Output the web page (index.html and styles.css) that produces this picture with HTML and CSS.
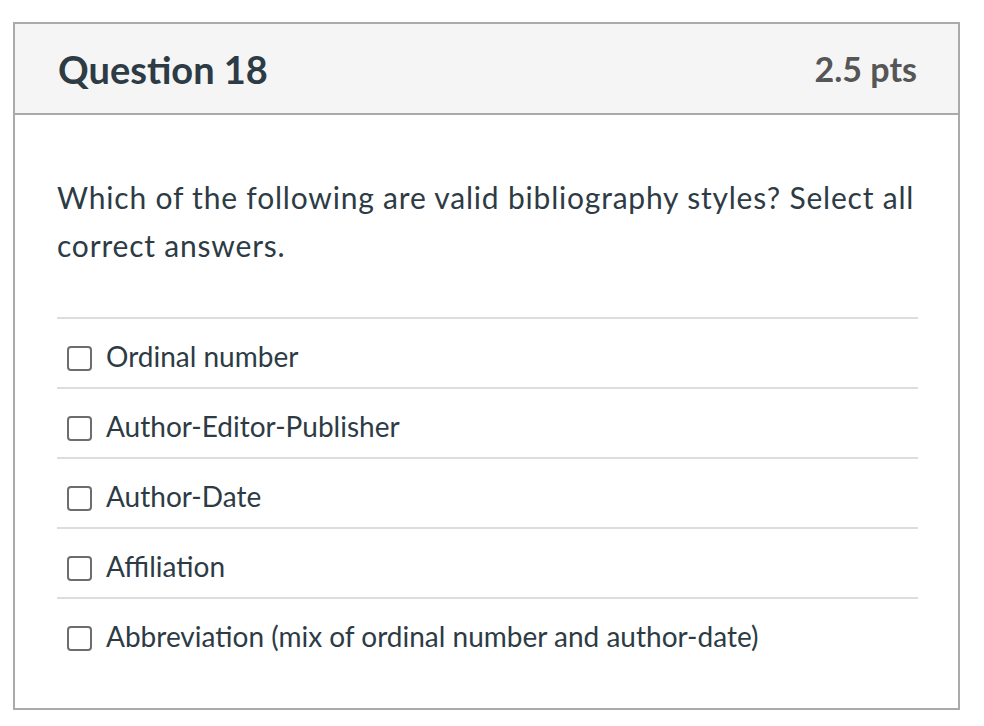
FILE: index.html
```html
<!DOCTYPE html>
<html lang="en">
<head>
<meta charset="utf-8">
<title>Question 18</title>
<link rel="stylesheet" href="styles.css">
</head>
<body>
<div class="question">
  <div class="header">
    <h2 class="title">Question 18</h2>
    <div class="points">2.5 pts</div>
  </div>
  <div class="body">
    <p class="prompt">Which of the following are valid bibliography styles? Select all correct answers.</p>
    <ul class="answers">
      <li class="answer"><span class="box"></span><span class="label">Ordinal number</span></li>
      <li class="answer"><span class="box"></span><span class="label">Author-Editor-Publisher</span></li>
      <li class="answer"><span class="box"></span><span class="label">Author-Date</span></li>
      <li class="answer"><span class="box"></span><span class="label">Affiliation</span></li>
      <li class="answer"><span class="box"></span><span class="label">Abbreviation (mix of ordinal number and author-date)</span></li>
    </ul>
  </div>
</div>
</body>
</html>
```

FILE: styles.css
```css
html, body {
  margin: 0;
  padding: 0;
  background: #ffffff;
}
body {
  font-family: Lato, "Open Sans", sans-serif;
  color: #2d3b45;
}
.question {
  margin: 22px 0 0 13px;
  width: 943px;
  border: 2px solid #aaaaaa;
}
.header {
  display: flex;
  align-items: center;
  justify-content: space-between;
  height: 89px;
  padding: 0 41px 0 43px;
  background: #f5f5f5;
  border-bottom: 2px solid #aaaaaa;
}
.title {
  margin: 0;
  font-size: 38px;
  font-weight: 700;
  color: #2d3b45;
}
.points {
  font-size: 34px;
  font-weight: 700;
  color: #565656;
}
.body {
  padding: 58px 40px 41px 42px;
}
.prompt {
  margin: 0 0 48px 0;
  font-size: 30px;
  letter-spacing: 0.8px;
  line-height: 48px;
}
.answers {
  list-style: none;
  margin: 0;
  padding: 0;
}
.answer {
  display: flex;
  align-items: center;
  gap: 14px;
  height: 68px;
  padding-left: 10px;
  border-top: 2px solid #dddddd;
  font-size: 28px;
}
.box {
  flex: none;
  width: 21px;
  height: 21px;
  border: 2px solid #6d6d6d;
  border-radius: 4px;
  margin-top: 10px;
}
.label {
  line-height: 39px;
  margin-top: 6px;
}
```
